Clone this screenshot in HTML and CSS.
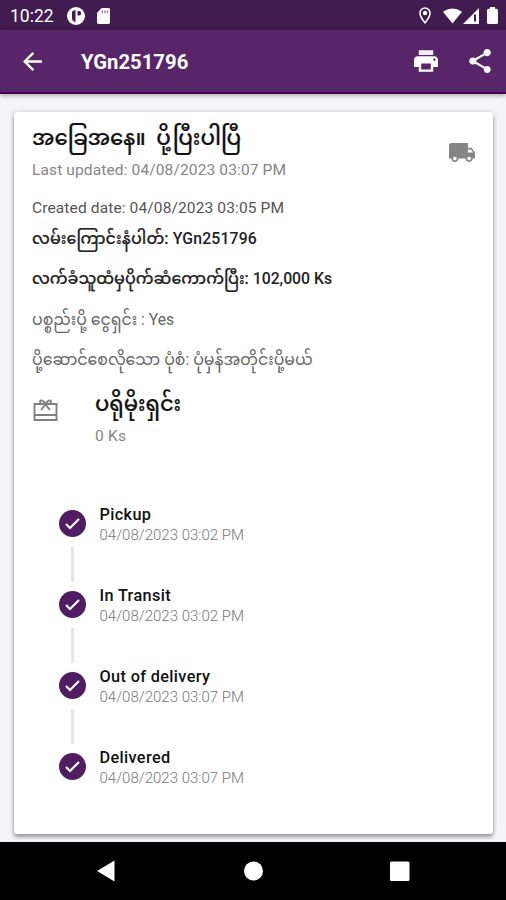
FILE: index.html
```html
<!DOCTYPE html>
<html lang="my">
<head>
<meta charset="utf-8">
<title>YGn251796</title>
<link rel="stylesheet" href="styles.css">
</head>
<body>
<div class="screen">
  <div class="status-bar">
    <span class="clock">10:22</span>
    <svg class="status-app" viewBox="0 0 18 18"><circle cx="9" cy="9" r="9" fill="#fff"/><path d="M5 4.500Q7 3 8.500 3v12Q5 14.500 5 11zM10.500 4h1.500a2 2 0 0 1 0 4.400h-1.500z" fill="#401c50"/></svg>
    <svg class="status-sd" viewBox="0 0 14 17"><path d="M5 0h7.500Q14 0 14 1.500v14q0 1.500-1.500 1.500h-11Q0 17 0 15.500V5z" fill="#fff"/><path d="M5 2.500h1.400v3H5zm2.800 0h1.400v3H7.800zm2.800 0H12v3h-1.400z" fill="#8d7998"/></svg>
    <div class="signals">
      <svg class="pin" viewBox="0 0 12 17"><path d="M6 1a5 5 0 0 0-5 5c0 3.800 5 9.800 5 9.800S11 9.800 11 6a5 5 0 0 0-5-5z" fill="none" stroke="#fff" stroke-width="1.600"/><circle cx="6" cy="6" r="2.200" fill="#fff"/></svg>
      <svg class="wifi" viewBox="0 0 20 16"><path d="M0 3.500Q10-3.500 20 3.500L10 16z" fill="#fff"/></svg>
      <svg class="cell" viewBox="0 0 16 16"><path d="M16 0v16H0z" fill="#fff"/><path d="M11 6.500h2v7h-2z" fill="#401c50"/></svg>
      <svg class="battery" viewBox="0 0 11 17"><path d="M3 0h5v1.800h1.500Q11 1.800 11 3.300v12.200Q11 17 9.500 17h-8Q0 17 0 15.500V3.300Q0 1.800 1.500 1.800H3z" fill="#fff"/></svg>
    </div>
  </div>
  <header class="app-bar">
    <svg class="back" viewBox="4 4 16 16"><path d="M20 11H7.830l5.590-5.590L12 4l-8 8 8 8 1.410-1.410L7.830 13H20v-2z"/></svg>
    <h1>YGn251796</h1>
    <svg class="print" viewBox="2 3 20 18"><path d="M19 8H5c-1.660 0-3 1.340-3 3v6h4v4h12v-4h4v-6c0-1.660-1.340-3-3-3zm-3 11H8v-5h8v5zm3-7c-.55 0-1-.45-1-1s.45-1 1-1 1 .45 1 1-.45 1-1 1z"/><path d="M18 3H6v4h12z" opacity=".92"/></svg>
    <svg class="share" viewBox="3 2 18 20"><path d="M18 16.080c-.76 0-1.440.3-1.960.77L8.910 12.700c.05-.23.09-.46.09-.7s-.04-.47-.09-.7l7.050-4.110c.54.5 1.250.81 2.040.81 1.660 0 3-1.340 3-3s-1.340-3-3-3-3 1.340-3 3c0 .24.04.47.09.7L8.040 9.810C7.500 9.310 6.790 9 6 9c-1.660 0-3 1.340-3 3s1.340 3 3 3c.79 0 1.500-.31 2.040-.81l7.120 4.160c-.05.21-.08.43-.08.65 0 1.610 1.310 2.920 2.920 2.920s2.920-1.310 2.920-2.920-1.310-2.920-2.920-2.920z"/></svg>
  </header>
  <main>
    <section class="card">
      <div class="summary">
        <div>
          <h2>အခြေအနေ။&nbsp; ပို့ပြီးပါပြီ</h2>
          <p class="updated">Last updated: 04/08/2023 03:07 PM</p>
        </div>
        <svg class="truck" viewBox="1 4 22 16"><path d="M20 8h-3V4H3c-1.100 0-2 .9-2 2v11h2c0 1.660 1.340 3 3 3s3-1.340 3-3h6c0 1.660 1.340 3 3 3s3-1.340 3-3h2v-5l-3-4zM6 18.500c-.83 0-1.500-.67-1.500-1.500s.67-1.500 1.500-1.500 1.500.67 1.500 1.500-.67 1.500-1.500 1.500zm13.500-9l1.960 2.500H17V9.500h2.500zm-1.500 9c-.83 0-1.500-.67-1.500-1.500s.67-1.500 1.500-1.500 1.500.67 1.500 1.500-.67 1.500-1.500 1.500z"/></svg>
      </div>
      <p class="created">Created date: 04/08/2023 03:05 PM</p>
      <p class="tracking"><span class="my">လမ်းကြောင်းနံပါတ်:</span> YGn251796</p>
      <p class="collect"><span class="my">လက်ခံသူထံမှပိုက်ဆံကောက်ပြီး:</span> 102,000 Ks</p>
      <p class="paid">ပစ္စည်းပို့ ငွေရှင်း : Yes</p>
      <p class="mode">ပို့ဆောင်စေလိုသော ပုံစံ: ပုံမှန်အတိုင်းပို့မယ်</p>
      <div class="promo">
        <svg class="gift" viewBox="0 0 24 22"><g fill="none" stroke="#808080" stroke-width="1.900"><path d="M1 5h22v16H1zM1 16h22"/><path d="M12 5.500C10.500 1 6.500.3 6.500 3c0 1.600 2 2.200 5.500 2.200S17.500 4.600 17.500 3C17.500.3 13.500 1 12 5.500L7.500 11M12 5.500l4.500 5.500"/></g></svg>
        <div>
          <h3>ပရိုမိုးရှင်း</h3>
          <p class="amount">0 Ks</p>
        </div>
      </div>
      <ol class="timeline">
        <li><div class="rail"><svg class="check" viewBox="0 0 27 27"><circle cx="13.500" cy="13.500" r="13.500"/><path d="M7 14l4 4 9-9"/></svg><i></i></div><div><h4>Pickup</h4><p>04/08/2023 03:02 PM</p></div></li>
        <li><div class="rail"><svg class="check" viewBox="0 0 27 27"><circle cx="13.500" cy="13.500" r="13.500"/><path d="M7 14l4 4 9-9"/></svg><i></i></div><div><h4>In Transit</h4><p>04/08/2023 03:02 PM</p></div></li>
        <li><div class="rail"><svg class="check" viewBox="0 0 27 27"><circle cx="13.500" cy="13.500" r="13.500"/><path d="M7 14l4 4 9-9"/></svg><i></i></div><div><h4>Out of delivery</h4><p>04/08/2023 03:07 PM</p></div></li>
        <li><div class="rail"><svg class="check" viewBox="0 0 27 27"><circle cx="13.500" cy="13.500" r="13.500"/><path d="M7 14l4 4 9-9"/></svg></div><div><h4>Delivered</h4><p>04/08/2023 03:07 PM</p></div></li>
      </ol>
    </section>
  </main>
  <nav class="nav-bar">
    <svg viewBox="0 0 20 22"><path d="M18.500 .5v21L1 11z"/></svg>
    <svg viewBox="0 0 20 22"><circle cx="10.500" cy="11" r="9.500"/></svg>
    <svg viewBox="0 0 20 22"><rect x="0" y="1.500" width="19.500" height="19.500" rx="1.500"/></svg>
  </nav>
</div>
</body>
</html>
```

FILE: styles.css
```css
* { box-sizing: border-box; margin: 0; padding: 0; }
body { font-family: Roboto, "Noto Sans Myanmar", "Noto Sans", sans-serif; background: #f3f5f7; }
svg { display: block; flex: none; }
p, h1, h2, h3, h4 { white-space: nowrap; }
.screen { width: 506px; height: 900px; display: flex; flex-direction: column; overflow: hidden; }

.status-bar { height: 30px; flex: none; background: #401c50; color: #fff; display: flex; align-items: center; padding: 1px 8px 0 10px; }
.clock { font-size: 17.5px; width: 57px; }
.status-app { width: 18px; height: 18px; margin-right: 12px; }
.status-sd { width: 13px; height: 16px; }
.signals { margin-left: auto; display: flex; align-items: center; }
.pin { width: 12px; height: 17px; margin-right: 12px; }
.wifi { width: 19px; height: 16px; margin-right: 1px; }
.cell { width: 16px; height: 16px; margin-right: 8px; }
.battery { width: 11px; height: 17px; }

.app-bar { height: 64px; flex: none; background: #582568; border-bottom: 2px solid #420354; display: flex; align-items: center; padding: 0 15px 0 23px; color: #fff; fill: #fff; box-shadow: 0 1px 5px rgba(0,0,0,.4); z-index: 1; }
.back { width: 19px; height: 19px; margin-right: 39px; }
.app-bar h1 { font-size: 20.3px; font-weight: 700; line-height: 30px; flex: 1; padding-top: 1px; }
.print { width: 24px; height: 22px; margin-right: 31px; }
.share { width: 22px; height: 24px; }

main { flex: 1; min-height: 0; padding: 18px 13px 8px 14px; }
.card { height: 722px; background: #fff; border-radius: 3px; padding: 6px 18px 0; box-shadow: 0 3px 4px rgba(0,0,0,.35), 0 0 5px rgba(0,0,0,.15); color: #222; }
.summary { display: flex; justify-content: space-between; }
.summary h2 { font-size: 21.3px; line-height: 40px; height: 40px; font-weight: 500; color: #111; -webkit-text-stroke: .2px #111; }
.updated { font-size: 15.5px; letter-spacing: .13px; line-height: 24px; color: #858585; }
.truck { width: 26px; height: 19px; margin-top: 25px; fill: #858585; }
.created { margin-top: 14px; font-size: 15.5px; letter-spacing: .13px; line-height: 24px; color: #555; }
.tracking { height: 38px; line-height: 38px; font-size: 15.800px; font-weight: 500; letter-spacing: .15px; }
.collect { height: 42px; line-height: 42px; font-size: 15.800px; font-weight: 500; }
.my { font-size: 15.900px; -webkit-text-stroke: .2px #222; }
.paid, .mode { height: 40px; line-height: 40px; font-size: 15.750px; color: #666; }
.promo { display: flex; margin-top: 6px; height: 119px; }
.gift { width: 25px; height: 22px; margin: 13px 37px 0 1px; }
.promo h3 { height: 36px; line-height: 36px; font-size: 21px; font-weight: 500; color: #111; -webkit-text-stroke: .2px #111; }
.amount { font-size: 15.5px; letter-spacing: .2px; line-height: 28px; color: #858585; }

.timeline { list-style: none; padding-left: 27px; }
.timeline li { display: flex; height: 81px; }
.rail { width: 27px; margin-right: 13px; padding-top: 5px; display: flex; flex-direction: column; align-items: center; }
.check { width: 27px; height: 27px; }
.check circle { fill: #501d62; }
.check path { fill: none; stroke: #fff; stroke-width: 2.200; }
.rail i { width: 3px; height: 35px; margin-top: 10px; background: #e5e5e5; }
.timeline h4 { font-size: 16.3px; letter-spacing: .35px; line-height: 20px; font-weight: 500; color: #111; padding-left: .5px; }
.timeline p { font-size: 15px; line-height: 21px; color: #777; font-weight: 300; padding-left: .5px; }

.nav-bar { height: 58px; flex: none; background: #000; display: flex; justify-content: space-between; align-items: center; padding: 0 96px; fill: #fff; z-index: 1; }
.nav-bar svg { width: 20px; height: 22px; }
```
